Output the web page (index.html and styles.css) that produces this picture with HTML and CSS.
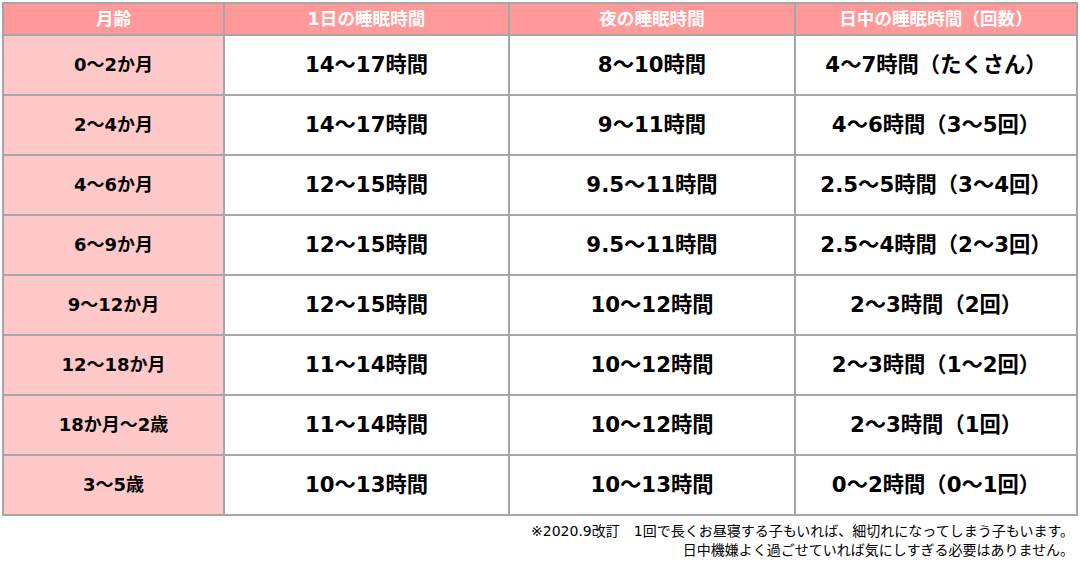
FILE: index.html
```html
<!DOCTYPE html>
<html lang="ja">
<head>
<meta charset="utf-8">
<link rel="stylesheet" href="styles.css">
</head>
<body>
<table class="sleep">
<thead>
<tr class="head"><th class="c1">月齢</th><th class="c2">1日の睡眠時間</th><th class="c3">夜の睡眠時間</th><th class="c4">日中の睡眠時間（回数）</th></tr>
</thead>
<tbody>
<tr><th class="age">0～2か月</th><td>14～17時間</td><td>8～10時間</td><td>4～7時間（たくさん）</td></tr>
<tr><th class="age">2～4か月</th><td>14～17時間</td><td>9～11時間</td><td>4～6時間（3～5回）</td></tr>
<tr><th class="age">4～6か月</th><td>12～15時間</td><td>9.5～11時間</td><td>2.5～5時間（3～4回）</td></tr>
<tr><th class="age">6～9か月</th><td>12～15時間</td><td>9.5～11時間</td><td>2.5～4時間（2～3回）</td></tr>
<tr><th class="age">9～12か月</th><td>12～15時間</td><td>10～12時間</td><td>2～3時間（2回）</td></tr>
<tr><th class="age">12～18か月</th><td>11～14時間</td><td>10～12時間</td><td>2～3時間（1～2回）</td></tr>
<tr><th class="age">18か月～2歳</th><td>11～14時間</td><td>10～12時間</td><td>2～3時間（1回）</td></tr>
<tr><th class="age">3～5歳</th><td>10～13時間</td><td>10～13時間</td><td>0～2時間（0～1回）</td></tr>
</tbody>
</table>
<div class="note">
<p>※2020.9改訂　1回で長くお昼寝する子もいれば、細切れになってしまう子もいます。</p>
<p>日中機嫌よく過ごせていれば気にしすぎる必要はありません。</p>
</div>
</body>
</html>
```

FILE: styles.css
```css
html, body {
  margin: 0;
  padding: 0;
  background: #ffffff;
}
body {
  padding: 2px 2px 0 2px;
  font-family: "DejaVu Sans", "Noto Sans CJK JP", sans-serif;
  color: #000;
}
.sleep {
  border-collapse: collapse;
  width: 1076px;
  table-layout: fixed;
}
.sleep th, .sleep td {
  border: 2px solid #a6a6a6;
  text-align: center;
  vertical-align: middle;
  padding: 0;
  font-weight: 700;
}
.head th {
  background: #ff999a;
  color: #ffffff;
  height: 30px;
  font-size: 17.6px;
  line-height: 20px;
}
.c1 { width: 219px; }
.c2 { width: 283px; }
.c3 { width: 284px; }
tbody tr { height: 60px; }
.sleep td {
  font-size: 21.3px;
  line-height: 24px;
  background: #ffffff;
}
.sleep .age {
  background: #ffc9c9;
  font-size: 18px;
  line-height: 22px;
}
.note {
  text-align: right;
  padding: 6px 4px 0 0;
  font-size: 14px;
  line-height: 19px;
}
.note p { margin: 0; }
```
